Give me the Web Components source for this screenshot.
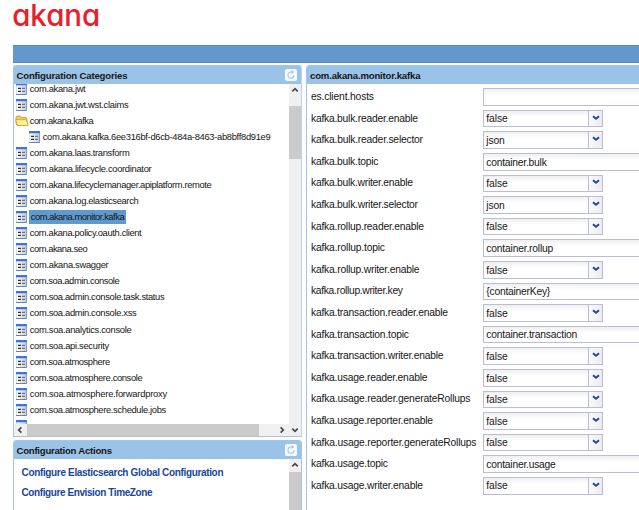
<!DOCTYPE html>
<html lang="en">
<head>
<meta charset="utf-8">
<title>Akana Configuration</title>
<style>
html,body{margin:0;width:639px;height:510px;overflow:hidden;background:#fff;font-family:"Liberation Sans",Arial,sans-serif;color:#161616}
</style>
</head>
<body>
<config-app></config-app>
<script>
class Base extends HTMLElement{
  constructor(){super();this.attachShadow({mode:'open'});}
  connectedCallback(){this.shadowRoot.innerHTML=this.view();this.ready&&this.ready();}
  view(){return '';}
}
const def=(n,c)=>customElements.define(n,c);

/* Text spread over a given width through its letter spacing */
def('fit-text',class extends Base{
  view(){return `<style>:host{display:inline-block;white-space:pre;width:max-content}</style><span>${this.getAttribute('text')}</span>`;}
  ready(){
    const s=this.shadowRoot.querySelector('span'),w=+this.getAttribute('w');
    if(w)s.style.letterSpacing=((w-s.getBoundingClientRect().width)/(s.textContent.length-1))+'px';
  }
});
def('brand-logo',class extends Base{
  view(){return `<style>:host{display:block;height:45px}svg{display:block}</style>
  <svg width="120" height="40"><text x="12.2" y="25.7" textLength="88" lengthAdjust="spacingAndGlyphs" fill="#e8202a" style="font:500 30px Inter,sans-serif;font-feature-settings:'cv11' 1">akana</text></svg>`;}
});
def('item-icon',class extends Base{
  view(){return `<style>:host{display:block;width:11px;height:12px}svg{display:block}</style>
  <svg width="11" height="12"><defs><linearGradient id="g"><stop stop-color="#fff"/><stop offset="1" stop-color="#c5d0e2"/></linearGradient></defs>
  <rect x="0" y="0" width="11" height="12" fill="#b9c9e8"/><rect x=".6" y="2" width="9.4" height="9" fill="url(#g)"/><rect width="11" height="2.3" fill="#3e74dc"/><rect y="11" width="11" height="1" fill="#6d82aa"/><rect x="10" y="2" width="1" height="10" fill="#7f98c4"/>
  <path d="M2 5.3h3M2 8.3h3" stroke="#343434" stroke-width="1.2"/><path d="M6 5.3h3M6 8.3h3" stroke="#4d5868"/></svg>`;}
});
def('folder-icon',class extends Base{
  view(){return `<style>:host{display:block;width:14px;height:12px}svg{display:block}</style>
  <svg width="14" height="12"><path d="M1 9V2.2L2.2 1h3L6.5 2.5H11L12 4v6H2z" fill="#f4cf52" stroke="#bd9324" stroke-width=".8"/><path d="M.6 4.7h10.8l1.8 5.8H2.5z" fill="#fff09a" stroke="#c69c2b" stroke-width=".8"/></svg>`;}
});
def('tree-row',class extends Base{
  view(){const g=n=>this.hasAttribute(n);
  return `<style>:host{display:flex;align-items:center;height:16.05px;flex:none;padding-left:${g('child')?15.5:g('folder')?1:2.5}px;font-size:9.4px;gap:${g('folder')?1.2:2.7}px}
  .t{line-height:13px;height:14px}.sel{background:#5f9ace;padding:0 1.5px;margin-left:-.5px;height:14px}</style>
  ${g('folder')?'<folder-icon></folder-icon>':'<item-icon></item-icon>'}<div class="t ${g('sel')?'sel':''}"><fit-text text="${this.getAttribute('text')}" w="${this.getAttribute('w')}"></fit-text></div>`;}
});
def('refresh-button',class extends Base{
  view(){return `<style>:host{display:block}svg{display:block}</style><svg width="12" height="12"><rect width="12" height="12" rx="2" fill="#f7fbff"/><path d="M7.3 3H6a3.1 3.1 0 1 0 3.1 3.2" fill="none" stroke="#9fc5ea" stroke-width="1.1"/><path d="M6.6 1l2.7 2-2.7 2z" fill="#9fc5ea"/></svg>`;}
});
def('panel-box',class extends Base{
  view(){return `<style>:host{display:flex;flex-direction:column;box-sizing:border-box;border:1px solid #a3c5ec;border-radius:3px 3px 0 0;overflow:hidden;background:#fff}
  header{flex:none;height:18px;background:#9bc3e8;display:flex;align-items:center;justify-content:space-between;padding:0 4px 0 3px;font-weight:bold;font-size:9.6px}
  .b{flex:1;min-height:0;display:flex;flex-direction:column}</style>
  <header><fit-text text="${this.getAttribute('heading')}" w="${this.getAttribute('w')}"></fit-text>${this.hasAttribute('refresh')?'<refresh-button></refresh-button>':''}</header><div class="b"><slot></slot></div>`;}
});
def('scroll-arrow',class extends Base{
  view(){const r={up:0,right:90,down:180,left:270}[this.getAttribute('dir')];
  return `<style>:host{display:block;flex:none}svg{display:block;transform:rotate(${r}deg)}</style><svg width="12" height="12"><path d="M3.3 7.4L6 4.7l2.7 2.7" fill="none" stroke="#484848" stroke-width="1.7"/></svg>`;}
});
def('v-scroll',class extends Base{
  view(){return `<style>:host{display:flex;flex-direction:column;align-items:center;justify-content:space-between;width:12px;background:#f0f0f0;flex:none}
  .track{flex:1;width:12px;padding-top:${this.getAttribute('top')}px}.thumb{height:${this.getAttribute('size')}px;background:#cbcbcb}</style>
  <scroll-arrow dir="up"></scroll-arrow><div class="track"><div class="thumb"></div></div>${this.hasAttribute('end')?'<scroll-arrow dir="down"></scroll-arrow>':''}`;}
});
def('h-scroll',class extends Base{
  view(){return `<style>:host{display:flex;align-items:center;height:12px;background:#f0f0f0;flex:none}i{display:block;height:12px;width:232px;background:#cbcbcb;margin-right:auto}scroll-arrow{padding:0 1px 0 0}</style>
  <scroll-arrow dir="left"></scroll-arrow><i></i><scroll-arrow dir="right"></scroll-arrow>`;}
});
const rows=[['com.akana.jwt',56],['com.akana.jwt.wst.claims',99],['com.akana.kafka',64,'folder'],['com.akana.kafka.6ee316bf-d6cb-484a-8463-ab8bff8d91e9',228,'child'],['com.akana.laas.transform',100],['com.akana.lifecycle.coordinator',122],['com.akana.lifecyclemanager.apiplatform.remote',182],['com.akana.log.elasticsearch',109],['com.akana.monitor.kafka',94,'sel'],['com.akana.policy.oauth.client',112],['com.akana.seo',58],['com.akana.swagger',79],['com.soa.admin.console',90],['com.soa.admin.console.task.status',135],['com.soa.admin.console.xss',107],['com.soa.analytics.console',102],['com.soa.api.security',79.5],['com.soa.atmosphere',80.5],['com.soa.atmosphere.console',113],['com.soa.atmosphere.forwardproxy',137.5],['com.soa.atmosphere.schedule.jobs',136.5]];
def('category-tree',class extends Base{
  view(){return `<style>:host{display:flex;flex:1;min-height:0}.l{flex:1;min-width:0;display:flex;flex-direction:column}.rows{flex:1;min-height:0;overflow:hidden}.in{margin-top:-3.2px}</style>
  <div class="l"><div class="rows"><div class="in">${rows.map(r=>`<tree-row text="${r[0]}" w="${r[1]}" ${r[2]||''}></tree-row>`).join('')}<tree-row text="" w="0"></tree-row></div></div><h-scroll></h-scroll></div><v-scroll top="10" size="53" end></v-scroll>`;}
});
def('action-list',class extends Base{
  view(){return `<style>:host{display:flex;flex:1;min-height:0}.l{flex:1;padding:6.5px 0 0 8px;display:flex;flex-direction:column}a{display:block;height:20px;line-height:13px;font-size:10px;font-weight:bold;color:#17479b;text-decoration:underline;text-underline-offset:1.5px;text-decoration-thickness:1px}</style>
  <div class="l"><a><fit-text text="Configure Elasticsearch Global Configuration" w="202"></fit-text></a><a><fit-text text="Configure Envision TimeZone" w="131"></fit-text></a></div><v-scroll top="1" size="90"></v-scroll>`;}
});
def('form-row',class extends Base{
  view(){const v=this.getAttribute('value'),sel=['false','json'].includes(v),vw={false:21.5,json:18.5,'container.bulk':60.5,'container.rollup':67,'{containerKey}':64,'container.transaction':91,'container.usage':69.5}[v]||0;
  return `<style>:host{display:grid;grid-template-columns:172px 1fr;align-items:center;height:21.6px;padding-left:4px;font-size:10.3px}
  .f{box-sizing:border-box;height:17.6px;border:1px solid #babdd3;background:linear-gradient(#efeff1,#fff 6px);display:flex;align-items:center;justify-content:space-between;padding-left:2.3px;width:${sel?'120px':'170px'}}
  .d{width:13px;height:100%;border-left:1px solid #babdd3;background:linear-gradient(90deg,#fafafb,#ebecef);display:flex;align-items:center;justify-content:center}
  fit-text{line-height:12px}.f fit-text{padding-top:1.4px}svg{display:block;margin-top:-2px}</style>
  <fit-text text="${this.getAttribute('label')}" w="${this.getAttribute('w')}"></fit-text>
  <div class="f"><fit-text text="${v}" w="${vw}"></fit-text>${sel?'<div class="d"><svg width="8" height="6"><path d="M1 1.2L4 3.7l3-2.5" fill="none" stroke="#26479c" stroke-width="2"/></svg></div>':''}</div>`;}
});
const fields=[['es.client.hosts',63,''],['kafka.bulk.reader.enable',107,'false'],['kafka.bulk.reader.selector',112,'json'],['kafka.bulk.topic',67.5,'container.bulk'],['kafka.bulk.writer.enable',102,'false'],['kafka.bulk.writer.selector',107,'json'],['kafka.rollup.reader.enable',113,'false'],['kafka.rollup.topic',74,'container.rollup'],['kafka.rollup.writer.enable',108.5,'false'],['kafka.rollup.writer.key',92,'{containerKey}'],['kafka.transaction.reader.enable',137,'false'],['kafka.transaction.topic',98,'container.transaction'],['kafka.transaction.writer.enable',132.5,'false'],['kafka.usage.reader.enable',116.5,'false'],['kafka.usage.reader.generateRollups',159.5,'false'],['kafka.usage.reporter.enable',122,'false'],['kafka.usage.reporter.generateRollups',165.5,'false'],['kafka.usage.topic',77,'container.usage'],['kafka.usage.writer.enable',112,'false']];
def('property-form',class extends Base{
  view(){return `<style>:host{display:block;padding-top:2.3px}</style>${fields.map(f=>`<form-row label="${f[0]}" w="${f[1]}" value="${f[2]}"></form-row>`).join('')}`;}
});
def('config-app',class extends Base{
  view(){return `<style>:host{display:block;width:639px;height:510px;overflow:hidden}
  .bar{height:18px;margin-left:12.5px;background:#6298cc;box-sizing:border-box;border-top:1px solid #558bc0;border-bottom:1px solid #558bc0}
  .m{display:grid;grid-template-columns:289px 340px;gap:4.5px;margin:2px 0 0 12.5px;height:460px}
  .left{display:flex;flex-direction:column;gap:3px}.a{height:372px;flex:none;border-right-color:#bdd3f0}.b{height:90px;flex:none}.left panel-box{box-shadow:inset -2px 0 #c9daf4}</style>
  <brand-logo></brand-logo><div class="bar"></div>
  <div class="m"><div class="left"><panel-box class="a" heading="Configuration Categories" w="111" refresh><category-tree></category-tree></panel-box>
  <panel-box class="b" heading="Configuration Actions" w="95.5" refresh><action-list></action-list></panel-box></div>
  <panel-box heading="com.akana.monitor.kafka" w="110.5"><property-form></property-form></panel-box></div>`;}
});
</script>
</body>
</html>
